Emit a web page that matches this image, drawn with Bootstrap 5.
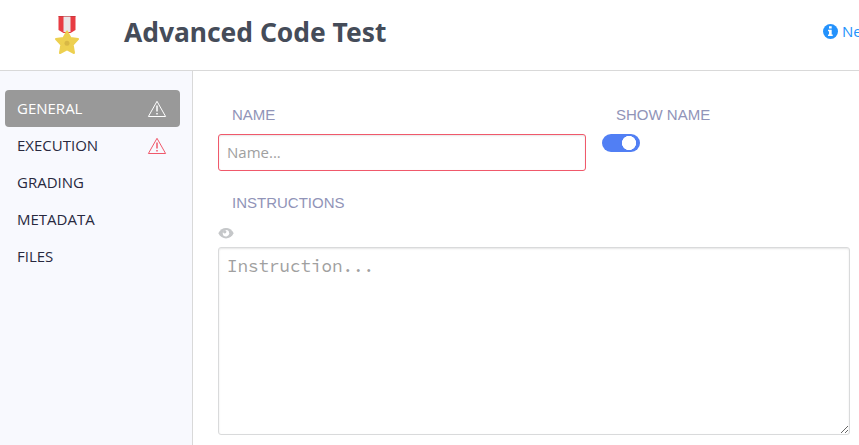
<!DOCTYPE html>
<html lang="en">
<head>
<meta charset="utf-8">
<meta name="viewport" content="width=device-width, initial-scale=1">
<title>Advanced Code Test</title>
<link href="https://cdn.jsdelivr.net/npm/bootstrap@5.3.0/dist/css/bootstrap.min.css" rel="stylesheet">
<style>
body{font-family:"Open Sans","Noto Sans",sans-serif;font-size:15px;line-height:21px;height:445px;color:#28293f;background:#fff}
.topbar{height:71px;border-bottom:1px solid #d9d9d9;padding-left:54px}
.topbar h1{font:700 26.4px/36px "Noto Sans",sans-serif;color:#454c59;margin:-7px 0 0 44px}
.help-area{width:36px;margin-top:-8px;color:#2492fc}
.side{width:193px;border-right:1px solid #d9d9d9;background:#f8f9fe;padding:19px 12px 0 5px}
.side .nav-link{height:37px;padding:0 12px;color:#28293f;border-radius:4px}
.side .nav-link.active{background:#999;color:#fff}
.warn{color:#f0596b;margin-right:1px}
.active .warn{color:#fff}
.main-area{padding:33px 9px 0 25px}
.field-label{font:15px/22px "Liberation Sans",Arial,sans-serif;color:#9194b8;padding-left:14px;display:block}
.name-col{width:368px;margin-right:16px}
.instructions-label{margin-top:21px}
.preview-icon{margin-top:13px;margin-bottom:3px}
.field-box,.field-box:focus{border:1px solid #d9dadb;border-radius:3px;box-shadow:inset 0 1px 2px rgba(10,10,10,.1);padding:7px 8px;color:#333}
.name-box,.name-box:focus{height:37px;font:15px/21px "Open Sans",sans-serif;border-color:#f0596b;margin-top:8px;padding:6px 8px 8px}
.field-box::placeholder{color:#a0a0a0;opacity:1}
.toggle.form-check-input{width:38px;height:18px;border:0;border-radius:9px;margin:8px 0 0;background-color:#517ff4;background-image:radial-gradient(circle at 27px 9px,#fff 6.8px,transparent 7.4px)!important;background-size:100% 100%;background-position:0 0;box-shadow:none}
.code-box,.code-box:focus{height:188px;font:17.5px/22px "Source Code Pro","Liberation Mono",monospace;resize:vertical}
</style>
</head>
<body class="d-flex flex-column overflow-hidden">
<header class="topbar d-flex align-items-center flex-shrink-0">
  <svg width="26" height="40" viewBox="0 0 26 40" class="flex-shrink-0">
    <path fill="#e83c43" d="M4.500 1h17v14l-5 3h-7l-5-3z"/>
    <path fill="#e9e7e8" d="M9.500 1h7v16h-7z"/>
    <path fill="#ba3339" opacity=".6" d="M4.500 1h17v1h-17z"/>
    <path fill="#edd050" stroke="#edd050" stroke-width="2" stroke-linejoin="round" d="M13 16.500l3.500 6.500 7.500 1-5.300 5.700 1.300 8.300-7-3.600L6 38l1.300-8.300L2 24l7.500-1z"/>
    <circle cx="13" cy="28.300" r="2.500" fill="#d8b845"/>
  </svg>
  <h1 class="text-nowrap">Advanced Code Test</h1>
  <div class="help-area ms-auto d-flex align-items-center overflow-hidden text-nowrap">
    <svg width="15" height="15" viewBox="0 0 15 15" class="flex-shrink-0 me-1"><circle cx="7.500" cy="7.500" r="7.500" fill="currentColor"/><path fill="#fff" d="M6 2.300h2.700v2.200H6zM5 5.700h3.700v4.800h1v1.600H5v-1.600h1V7.300H5z"/></svg>
    <span>Need help?</span>
  </div>
</header>
<div class="d-flex flex-grow-1">
  <nav class="side nav flex-column flex-nowrap flex-shrink-0">
    <a class="nav-link active d-flex align-items-center justify-content-between" href="#">GENERAL
      <svg class="warn" width="20" height="18" viewBox="0 0 20 18" fill="none" stroke="currentColor"><path d="M10 1.300L18.600 16.500H1.400z"/><path stroke-width="1.500" d="M10 5.500v6M10 13v1.500"/></svg></a>
    <a class="nav-link d-flex align-items-center justify-content-between" href="#">EXECUTION
      <svg class="warn" width="20" height="18" viewBox="0 0 20 18" fill="none" stroke="currentColor"><path d="M10 1.300L18.600 16.500H1.400z"/><path stroke-width="1.500" d="M10 5.500v6M10 13v1.500"/></svg></a>
    <a class="nav-link d-flex align-items-center" href="#">GRADING</a>
    <a class="nav-link d-flex align-items-center" href="#">METADATA</a>
    <a class="nav-link d-flex align-items-center" href="#">FILES</a>
  </nav>
  <main class="main-area flex-grow-1">
    <div class="d-flex">
      <div class="name-col">
        <label class="field-label" for="name">NAME</label>
        <input id="name" class="form-control field-box name-box" placeholder="Name...">
      </div>
      <div>
        <label class="field-label" for="show">SHOW NAME</label>
        <input id="show" type="checkbox" role="switch" class="form-check-input toggle d-block" checked>
      </div>
    </div>
    <label class="field-label instructions-label" for="code">INSTRUCTIONS</label>
    <svg class="preview-icon d-block" width="16" height="17" viewBox="0 0 16 17"><path fill="#c5c7c9" d="M.3 6.200C2 2.900 4.800 1 8 1s6 1.900 7.700 5.200C14 9.500 11.200 11.400 8 11.400S2 9.500.3 6.200z"/><circle cx="8" cy="6.200" r="3.200" fill="#fff"/><circle cx="6.700" cy="4.700" r="1.700" fill="#c5c7c9"/></svg>
    <textarea id="code" class="form-control field-box code-box" placeholder="Instruction..."></textarea>
  </main>
</div>
<script src="https://cdn.jsdelivr.net/npm/bootstrap@5.3.0/dist/js/bootstrap.bundle.min.js"></script>
</body>
</html>
